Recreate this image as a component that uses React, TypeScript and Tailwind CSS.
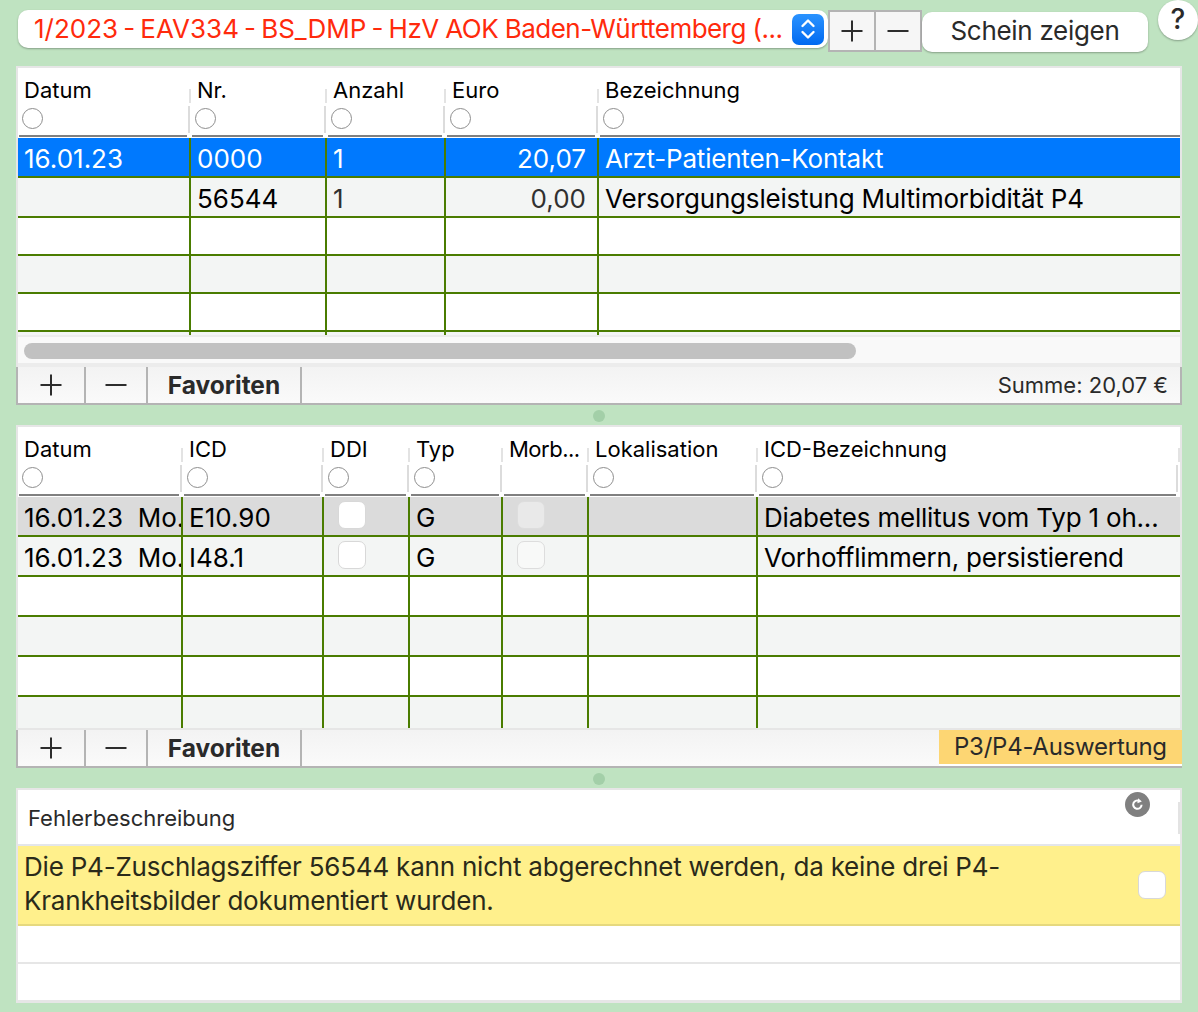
import React from "react";

const Plus = () => (
  <svg width="24" height="24" viewBox="0 0 24 24" stroke="#2d2d2d" strokeWidth="2"><path d="M12 1.5v21M1.5 12h21" /></svg>
);
const Minus = () => (
  <svg width="24" height="24" viewBox="0 0 24 24" stroke="#2d2d2d" strokeWidth="2"><path d="M1.5 12h21" /></svg>
);
const Radio = () => <span className="block w-[21px] h-[21px] rounded-full border border-[#8e8e8e] bg-white" />;

type Col = { w: string; label: string; radio?: boolean; tight?: boolean };
type Cell = { t?: string; right?: boolean; check?: "on" | "dim"; soft?: boolean; long?: boolean };
type Row = { h: string; bg: string; text?: string; cells: Cell[] };

function Header({ cols, endMark }: { cols: Col[]; endMark?: boolean }) {
  return (
    <div className="flex h-[70px] bg-white">
      {cols.map((c, i) => {
        const last = i === cols.length - 1;
        return (
          <div key={i} className={`${c.w} flex flex-col pt-[21px] min-w-0`}>
            <div
              className={`h-[14px] border-l-2 ${i === 0 ? "border-transparent pl-[4px]" : "border-[#e3e3e3] pl-[6px]"} ${last && endMark ? "border-r-2 border-r-[#e3e3e3]" : ""} ${c.tight ? "tracking-[-0.5px]" : ""} text-[22px] leading-[2px] text-black whitespace-nowrap`}
            >
              <span>{c.label}</span>
            </div>
            <div
              className={`mt-[3px] h-[27px] pb-[3px] border-l-2 ${i === 0 ? "border-transparent pl-[2px]" : "-ml-[1px] border-[#dcdcdc] pl-[5px]"} ${last && endMark ? "mr-[2px] border-r-2 border-r-[#dcdcdc]" : ""} flex items-center`}
            >
              {c.radio !== false && <Radio />}
            </div>
            <div className={`mt-auto mb-[1px] ${i === 0 ? "ml-[1px]" : "ml-[3px]"} ${last ? (endMark ? "mr-[4px]" : "mr-0") : "mr-[2px]"} h-[2px] bg-[#808080]`} />
          </div>
        );
      })}
    </div>
  );
}

function Rows({ cols, rows, height }: { cols: Col[]; rows: Row[]; height: string }) {
  return (
    <div className={`${height} overflow-hidden box-border`}>
      {rows.map((r, ri) => (
        <div key={ri} className={`flex ${r.h} ${r.bg} ${r.text ?? "text-black"} border-b-2 border-[#4a7c00] box-border`}>
          {cols.map((c, i) => {
            const cell = r.cells[i] ?? {};
            return (
              <div
                key={i}
                className={`${c.w} min-w-0 overflow-hidden flex items-center whitespace-pre text-[26px] leading-none ${i === 0 ? "pl-[6px]" : "border-l-2 border-[#4a7c00] pl-[6px]"} ${cell.right ? "justify-end pr-[11px]" : ""} ${cell.check ? "pb-[3px]" : "pt-[3px]"} ${cell.check === "on" ? "pl-[14px]" : ""} ${cell.check === "dim" ? "pl-[14px]" : ""} ${cell.soft ? "text-[#303030]" : ""} ${cell.long ? "tracking-[-0.2px]" : ""}`}
              >
                {cell.check === "on" && <span className="block w-[28px] h-[28px] rounded-[7px] bg-white border border-[#d8d8d8]" />}
                {cell.check === "dim" && <span className="block w-[28px] h-[28px] rounded-[7px] bg-[#ffffff66] border border-[#dddddd]" />}
                {cell.t}
              </div>
            );
          })}
        </div>
      ))}
    </div>
  );
}

function ToolBtn({ children, w }: { children: React.ReactNode; w: string }) {
  return (
    <div className={`${w} h-full flex items-center justify-center border-r-2 border-[#b4b4b4]`}>{children}</div>
  );
}

function Toolbar({ right }: { right: React.ReactNode }) {
  return (
    <div className="-mx-[2px] flex items-stretch h-[38px] bg-gradient-to-b from-[#f3f3f3] to-[#fafafa] border-x-2 border-b-2 border-[#b4b4b4]">
      <ToolBtn w="w-[68px]"><Plus /></ToolBtn>
      <ToolBtn w="w-[62px]"><Minus /></ToolBtn>
      <ToolBtn w="w-[154px]"><span className="text-[24.5px] font-bold text-[#2a2a2a]">Favoriten</span></ToolBtn>
      <div className="flex-1 flex justify-end">{right}</div>
    </div>
  );
}

const Dot = () => (
  <div className="h-[20px] pt-[2px] flex items-center justify-center"><span className="w-[12px] h-[12px] rounded-full bg-[#a3cfa8]" /></div>
);

const cols1: Col[] = [
  { w: "w-[171px]", label: "Datum" },
  { w: "w-[136px]", label: "Nr." },
  { w: "w-[119px]", label: "Anzahl" },
  { w: "w-[153px]", label: "Euro" },
  { w: "flex-1", label: "Bezeichnung" },
];
const cols2: Col[] = [
  { w: "w-[163px]", label: "Datum" },
  { w: "w-[141px]", label: "ICD" },
  { w: "w-[86px]", label: "DDI" },
  { w: "w-[93px]", label: "Typ" },
  { w: "w-[86px]", label: "Morb...", radio: false, tight: true },
  { w: "w-[169px]", label: "Lokalisation" },
  { w: "flex-1", label: "ICD-Bezeichnung" },
];

const W = "bg-white";
const G = "bg-[#f3f5f4]";
const rows1: Row[] = [
  { h: "h-[40px]", bg: "bg-[#0079fe]", text: "text-white", cells: [{ t: "16.01.23" }, { t: "0000" }, { t: "1" }, { t: "20,07", right: true }, { t: "Arzt-Patienten-Kontakt", long: true }] },
  { h: "h-[40px]", bg: G, cells: [{}, { t: "56544" }, { t: "1", soft: true }, { t: "0,00", right: true, soft: true }, { t: "Versorgungsleistung Multimorbidität P4", long: true }] },
  { h: "h-[38px]", bg: W, cells: [] },
  { h: "h-[38px]", bg: G, cells: [] },
  { h: "h-[38px]", bg: W, cells: [] },
  { h: "h-[38px]", bg: G, cells: [] },
];
const rows2: Row[] = [
  { h: "h-[40px]", bg: "bg-[#dbdbdb]", cells: [{ t: "16.01.23  Mo." }, { t: "E10.90" }, { check: "on" }, { t: "G" }, { check: "dim" }, {}, { t: "Diabetes mellitus vom Typ 1 oh...", long: true }] },
  { h: "h-[40px]", bg: G, cells: [{ t: "16.01.23  Mo." }, { t: "I48.1" }, { check: "on" }, { t: "G" }, { check: "dim" }, {}, { t: "Vorhofflimmern, persistierend", long: true }] },
  { h: "h-[40px]", bg: W, cells: [] },
  { h: "h-[40px]", bg: G, cells: [] },
  { h: "h-[40px]", bg: W, cells: [] },
  { h: "h-[40px]", bg: G, cells: [] },
];

export default function App() {
  return (
    <div className="w-[1198px] h-[1012px] overflow-hidden bg-[#bfe3c1] text-[#222] font-['Inter','Liberation_Sans',sans-serif]">
      {/* Top bar */}
      <div className="h-[66px] flex items-start pl-[18px]">
        <div className="mt-[10px] w-[810px] h-[38px] rounded-[10px] bg-white shadow-[0_1px_2px_rgba(0,0,0,0.3)] flex items-center pl-[16px] pr-[4px]">
          <span className="flex-1 text-[26px] text-[#ff2a0c] whitespace-pre leading-none">
            <span className="[word-spacing:-2.2px]">1/2023 - EAV334 - BS_DMP - </span>
            <span className="tracking-[-0.55px]">HzV AOK Baden-Württemberg (...</span>
          </span>
          <span className="w-[32px] h-[31px] rounded-[7px] bg-gradient-to-b from-[#2a93ff] to-[#0069f0] flex items-center justify-center">
            <svg width="20" height="28" viewBox="0 0 20 28" fill="none" stroke="#fff" strokeWidth="2.4" strokeLinecap="round" strokeLinejoin="round"><path d="M4.5 11l5.5-5.5 5.5 5.5M4.5 17l5.5 5.5 5.5-5.5" /></svg>
          </span>
        </div>
        <div className="mt-[10px] w-[94px] h-[42px] flex border-2 border-[#b4b4b4] bg-[#f6f6f6]">
          <div className="flex-1 flex items-center justify-center border-r-2 border-[#b4b4b4]"><Plus /></div>
          <div className="flex-1 flex items-center justify-center"><Minus /></div>
        </div>
        <div className="mt-[12px] w-[226px] h-[40px] pb-[3px] rounded-[10px] bg-white shadow-[0_1px_2px_rgba(0,0,0,0.3)] flex items-center justify-center text-[26px] tracking-[-0.3px] text-[#2a2a2a]">Schein zeigen</div>
        <div className="ml-[10px] w-[40px] h-[40px] pb-[2px] rounded-full bg-white shadow-[0_1px_2px_rgba(0,0,0,0.3)] flex items-center justify-center text-[28px] font-medium text-[#2a2a2a]">?</div>
      </div>

      <div className="mx-[16px]">
        {/* Panel 1 */}
        <div className="border-x-2 border-t-2 border-[#e6e6e6] bg-white">
          <Header cols={cols1} />
          <Rows cols={cols1} rows={rows1} height="h-[197px]" />
          <div className="h-[32px] pt-[2px] bg-[#f9f9f9] border-t-2 border-b-4 border-[#ececec] flex items-center px-[6px]">
            <div className="w-[832px] h-[16px] rounded-full bg-[#c1c1c1]" />
          </div>
          <Toolbar right={<span className="self-center pr-[12px] text-[22px] text-[#2a2a2a]">Summe: 20,07 €</span>} />
        </div>

        <Dot />

        {/* Panel 2 */}
        <div className="border-x-2 border-t-2 border-[#e6e6e6] bg-white">
          <Header cols={cols2} endMark />
          <Rows cols={cols2} rows={rows2} height="h-[233px] border-b-2 border-[#e6e6e6]" />
          <Toolbar
            right={
              <div className="h-full w-[243px] -mr-[2px] bg-[#fdd673] flex items-center pl-[15px] text-[24px] tracking-[-0.25px] text-[#2a2a2a] border-b-2 border-white">P3/P4-Auswertung</div>
            }
          />
        </div>

        <Dot />

        {/* Panel 3 */}
        <div className="border-x-2 border-t-2 border-b-[3px] border-[#e6e6e6] bg-white">
          <div className="h-[56px] flex items-start border-b-2 border-[#e4e6ea]">
            <span className="flex-1 mt-[12px] ml-[10px] text-[22px] text-[#2a2a2a]">Fehlerbeschreibung</span>
            <span className="mt-[2px] mr-[28px] w-[25px] h-[25px] rounded-full bg-[#808080] flex items-center justify-center">
              <svg width="15" height="15" viewBox="0 0 15 15" fill="none" stroke="#fff" strokeWidth="2"><path d="M11.6 7.8a4.2 4.2 0 1 1-1.8-3.6" /><path d="M8.2 1.2l3.6 3.3-4.4 1.7z" fill="#fff" stroke="none" /></svg>
            </span>
            <span className="mt-[12px] w-[2px] h-[32px] bg-[#e3e3e3]" />
          </div>
          <div className="h-[80px] bg-[#fff08c] border-b-2 border-[#e6d97e] flex items-center pl-[6px] pr-[14px]">
            <p className="flex-1 -mt-[2px] text-[26px] leading-[34px] tracking-[-0.21px] text-[#2a2a1a]">Die P4-Zuschlagsziffer 56544 kann nicht abgerechnet werden, da keine drei P4-<br />Krankheitsbilder dokumentiert wurden.</p>
            <span className="w-[28px] h-[28px] rounded-[7px] bg-white border border-[#d8d8d8]" />
          </div>
          <div className="h-[38px] border-b-2 border-[#e6e6e6]" />
          <div className="h-[36px]" />
        </div>
      </div>
    </div>
  );
}
